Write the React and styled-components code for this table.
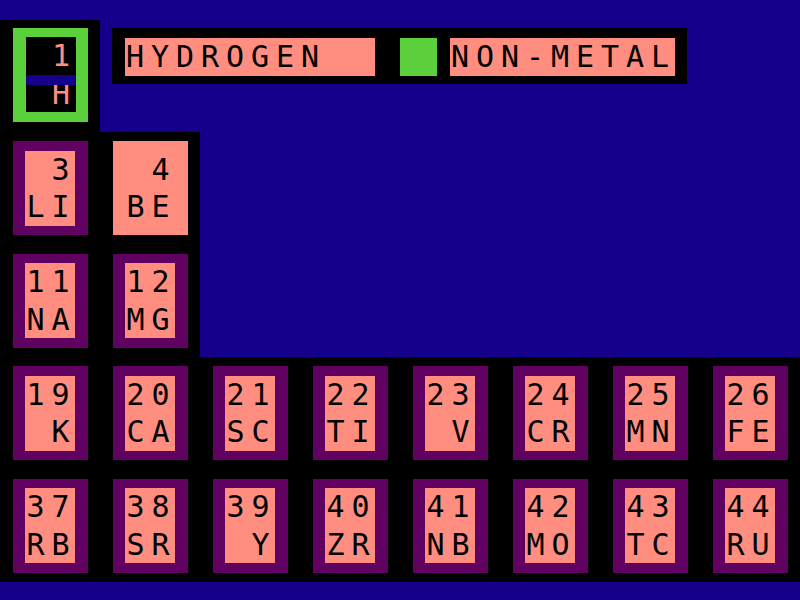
import styled, { createGlobalStyle } from 'styled-components';

const BLUE = '#14008a';
const BLACK = '#000000';
const PURPLE = '#600060';
const SALMON = '#ff8e80';
const GREEN = '#5ccf3c';

const GlobalStyle = createGlobalStyle`
    html, body {
        margin: 0;
        padding: 0;
        background: ${ BLUE };
    }

    body {
        width: 800px;
        height: 600px;
        overflow: hidden;
    }
`;

const Screen = styled.div`
    width: 800px;
    height: 600px;
    box-sizing: border-box;
    padding-top: 20px;
    background: ${ BLUE };
    display: flex;
    flex-direction: column;
    font-family: "DejaVu Sans Mono", "Liberation Mono", monospace;
    font-size: 30px;
`;

const TopRow = styled.div`
    display: flex;
    align-items: flex-start;
    height: 112px;
`;

const SelectedCell = styled.div`
    width: 100px;
    height: 112px;
    box-sizing: border-box;
    padding: 8px 12.5px 0 13px;
    background: ${ BLACK };
`;

const InfoPanel = styled.div`
    display: flex;
    align-items: flex-start;
    margin: 8px 0 0 12px;
    height: 56px;
    box-sizing: border-box;
    padding: 10px 12.5px;
    background: ${ BLACK };
`;

const Label = styled.div`
    display: flex;
    height: 37.5px;
    line-height: 37.5px;
    background: ${ SALMON };
    color: ${ BLACK };
    margin-right: ${ ( { $gap } ) => $gap || 0 }px;
`;

const Swatch = styled.div`
    width: 37.5px;
    height: 37.5px;
    background: ${ ( { $color } ) => $color };
    margin-right: 12.5px;
`;

const Block = styled.div`
    width: ${ ( { $cols } ) => $cols * 100 }px;
    height: 225px;
    box-sizing: border-box;
    padding: 9.4px 12.5px;
    background: ${ BLACK };
    display: grid;
    grid-template-columns: repeat(${ ( { $cols } ) => $cols }, 75px);
    grid-auto-rows: 93.75px;
    column-gap: 25px;
    row-gap: 18.75px;
`;

const Tile = styled.div`
    width: 75px;
    height: 93.75px;
    box-sizing: border-box;
    padding: 9.4px 12.5px;
    background: ${ ( { $frame } ) => $frame };
`;

const TileFace = styled.div`
    position: relative;
    width: 50px;
    height: 75px;
    background: ${ ( { $bg } ) => $bg };
    color: ${ ( { $ink } ) => $ink };
    overflow: hidden;
`;

// blue bar lying over the selected tile, between number and symbol
const Divider = styled.div`
    position: absolute;
    left: 0;
    right: 0;
    top: 38px;
    height: 9.5px;
    background: ${ BLUE };
`;

const Line = styled.div`
    display: flex;
    height: 37.5px;
    line-height: 37.5px;
`;

const Cell = styled.span`
    width: 21px;
    margin-right: 4px;
    text-align: center;
    white-space: pre;
`;

const Bottom = styled.div`
    flex: 1;
    background: ${ BLUE };
`;

function Chars( { text } ) {
    return text.split( '' ).map( ( ch, i ) => <Cell key={ i }>{ ch }</Cell> );
}

function Element( { number, symbol, frame = PURPLE, bg = SALMON, ink = BLACK, selected } ) {
    return (
        <Tile $frame={ frame }>
            <TileFace $bg={ bg } $ink={ ink }>
                <Line><Chars text={ String( number ).padStart( 2, ' ' ) } /></Line>
                <Line><Chars text={ symbol.padStart( 2, ' ' ) } /></Line>
                { selected && <Divider /> }
            </TileFace>
        </Tile>
    );
}

const middle = [
    { number: 3, symbol: 'LI' },
    { number: 4, symbol: 'BE', frame: SALMON },
    { number: 11, symbol: 'NA' },
    { number: 12, symbol: 'MG' },
];

const lower = [
    [ 19, 'K' ], [ 20, 'CA' ], [ 21, 'SC' ], [ 22, 'TI' ], [ 23, 'V' ], [ 24, 'CR' ], [ 25, 'MN' ], [ 26, 'FE' ],
    [ 37, 'RB' ], [ 38, 'SR' ], [ 39, 'Y' ], [ 40, 'ZR' ], [ 41, 'NB' ], [ 42, 'MO' ], [ 43, 'TC' ], [ 44, 'RU' ],
];

export default function App() {
    return (
        <>
            <GlobalStyle />
            <Screen>
                <TopRow>
                    <SelectedCell>
                        <Element number={ 1 } symbol="H" frame={ GREEN } bg={ BLACK } ink={ SALMON } selected />
                    </SelectedCell>

                    <InfoPanel>
                        <Label $gap={ 25 }><Chars text={ 'HYDROGEN'.padEnd( 10, ' ' ) } /></Label>
                        <Swatch $color={ GREEN } />
                        <Label><Chars text="NON-METAL" /></Label>
                    </InfoPanel>
                </TopRow>

                <Block $cols={ 2 }>
                    { middle.map( ( el ) => <Element key={ el.number } { ...el } /> ) }
                </Block>

                <Block $cols={ 8 }>
                    { lower.map( ( [ number, symbol ] ) => <Element key={ number } number={ number } symbol={ symbol } /> ) }
                </Block>

                <Bottom />
            </Screen>
        </>
    );
}
